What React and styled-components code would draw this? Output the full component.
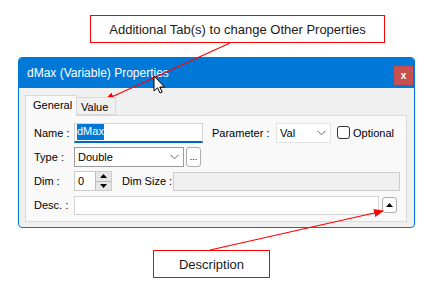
import React from 'react';
import styled, { createGlobalStyle } from 'styled-components';

const GlobalStyle = createGlobalStyle`
  body {
    margin: 0;
    background: #ffffff;
    font-family: "Liberation Sans", Arial, sans-serif;
  }
`;

const Page = styled.div`
  position: relative;
  width: 429px;
  height: 288px;
  padding-top: 15px;
  box-sizing: border-box;
  overflow: hidden;
`;

const Callout = styled.div`
  margin-left: ${(p) => p.$left}px;
  margin-top: ${(p) => p.$top || 0}px;
  width: ${(p) => p.$width}px;
  height: 28px;
  box-sizing: border-box;
  border: 1px solid #ff0000;
  display: flex;
  align-items: center;
  justify-content: center;
  font-size: 13px;
  color: #1a1a1a;
`;

const Window = styled.div`
  margin: 14px 0 0 18px;
  width: 397px;
  height: 171px;
  box-sizing: border-box;
  border: 1px solid #0078d7;
  border-radius: 4px;
  overflow: hidden;
  background: #f0f0f0;
`;

const TitleBar = styled.div`
  height: 30px;
  background: #0078d7;
  display: flex;
  align-items: center;
  justify-content: space-between;
  padding-left: 8px;
`;

const Title = styled.span`
  color: #ffffff;
  font-size: 12px;
`;

const CloseButton = styled.div`
  width: 19px;
  height: 19px;
  margin-top: 4px;
  margin-right: 1px;
  background: #c75050;
  color: #ffffff;
  font-size: 10px;
  font-weight: bold;
  display: flex;
  align-items: center;
  justify-content: center;
`;

const Body = styled.div`
  padding: 7px 7px 5px 6px;
`;

const TabStrip = styled.div`
  height: 20px;
  display: flex;
  align-items: flex-end;
`;

const Tab = styled.div`
  position: relative;
  z-index: 1;
  box-sizing: border-box;
  width: ${(p) => p.$width}px;
  height: ${(p) => (p.$active ? 21 : 18)}px;
  margin-bottom: ${(p) => (p.$active ? -1 : 0)}px;
  border: 1px solid #d9d9d9;
  border-bottom: ${(p) => (p.$active ? 'none' : '1px solid #d9d9d9')};
  border-left: ${(p) => (p.$active ? '1px solid #d9d9d9' : 'none')};
  background: ${(p) => (p.$active ? '#f9f9f9' : '#f0f0f0')};
  font-size: 11px;
  color: #000;
  padding-left: ${(p) => (p.$active ? 7 : 4)}px;
  padding-top: 3px;
`;

const Panel = styled.div`
  box-sizing: border-box;
  height: 107px;
  border: 1px solid #d9d9d9;
  background: #f9f9f9;
  padding: 6px 7px 0 8px;
  display: flex;
  flex-direction: column;
  gap: 4px;
`;

const Row = styled.div`
  display: flex;
  align-items: center;
  height: ${(p) => p.$height || 20}px;
`;

const Label = styled.span`
  flex: none;
  width: ${(p) => p.$width || 40}px;
  margin-left: ${(p) => p.$gap || 0}px;
  font-size: 11px;
  color: #000;
  white-space: nowrap;
`;

const TextBox = styled.div`
  flex: none;
  box-sizing: border-box;
  width: ${(p) => p.$width}px;
  height: ${(p) => p.$height || 19}px;
  background: ${(p) => (p.$disabled ? '#f0f0f0' : '#ffffff')};
  border: 1px solid ${(p) => (p.$disabled ? '#cccccc' : '#d4d4d4')};
  border-bottom: ${(p) => (p.$focused ? '2px solid #0067c0' : '')};
  display: flex;
  align-items: center;
  padding-left: 2px;
  font-size: 11px;
`;

const Selected = styled.span`
  background: #0078d7;
  color: #ffffff;
  padding: 1px 0 2px;
  line-height: 13px;
`;

const Select = styled.div`
  flex: none;
  box-sizing: border-box;
  width: ${(p) => p.$width}px;
  height: 20px;
  background: #ffffff;
  border: 1px solid ${(p) => (p.$light ? '#e3e3e3' : '#9a9a9a')};
  display: flex;
  align-items: center;
  justify-content: space-between;
  padding: 0 4px 0 3px;
  font-size: 11px;
  color: #000;
`;

const SmallButton = styled.div`
  flex: none;
  box-sizing: border-box;
  width: 15px;
  height: ${(p) => p.$height || 20}px;
  margin-left: ${(p) => p.$gap || 2}px;
  border: 1px solid #adadad;
  border-radius: 3px;
  background: #fdfdfd;
  display: flex;
  align-items: center;
  justify-content: center;
  font-size: 9px;
  color: #000;
`;

const CheckBox = styled.div`
  flex: none;
  box-sizing: border-box;
  width: 13px;
  height: 13px;
  margin-left: 6px;
  border: 1px solid #333333;
  border-radius: 3px;
  background: #ffffff;
`;

const CheckLabel = styled.span`
  margin-left: 3px;
  font-size: 11px;
  color: #000;
`;

const Spin = styled.div`
  flex: none;
  box-sizing: border-box;
  width: 38px;
  height: 20px;
  background: #ffffff;
  border: 1px solid #cccccc;
  display: flex;
  align-items: stretch;
  justify-content: space-between;
  font-size: 11px;
`;

const SpinValue = styled.span`
  align-self: center;
  padding-left: 3px;
`;

const SpinButtons = styled.div`
  width: 15px;
  display: flex;
  flex-direction: column;
  border-left: 1px solid #bcbcbc;
  background: #e6e6e6;
`;

const SpinArrow = styled.div`
  flex: 1;
  display: flex;
  align-items: center;
  justify-content: center;
  border-top: ${(p) => (p.$down ? '1px solid #bcbcbc' : 'none')};
`;

const Overlay = styled.svg`
  position: absolute;
  left: 0;
  top: 0;
  pointer-events: none;
`;

const Chevron = () => (
  <svg width="9" height="6" viewBox="0 0 9 6">
    <path d="M0.5 0.8 L4.5 4.8 L8.5 0.8" fill="none" stroke="#555" strokeWidth="0.9" />
  </svg>
);

const Tri = ({ down }) => (
  <svg width="7" height="4" viewBox="0 0 7 4">
    <path d={down ? 'M0 0 L7 0 L3.5 4 Z' : 'M0 4 L7 4 L3.5 0 Z'} fill="#000" />
  </svg>
);

const App = () => {
  return (
    <>
      <GlobalStyle />
      <Page>
        <Callout $left={90} $width={295}>
          Additional Tab(s) to change Other Properties
        </Callout>

        <Window>
          <TitleBar>
            <Title>dMax (Variable) Properties</Title>
            <CloseButton>x</CloseButton>
          </TitleBar>
          <Body>
            <TabStrip>
              <Tab $active $width={52}>General</Tab>
              <Tab $width={39}>Value</Tab>
            </TabStrip>
            <Panel>
              <Row $height={21}>
                <Label>Name :</Label>
                <TextBox $width={129} $height={20} $focused>
                  <Selected>dMax</Selected>
                </TextBox>
                <Label $gap={9} $width={64}>Parameter :</Label>
                <Select $width={55} $light>
                  Val
                  <Chevron />
                </Select>
                <CheckBox />
                <CheckLabel>Optional</CheckLabel>
              </Row>
              <Row>
                <Label>Type :</Label>
                <Select $width={110}>
                  Double
                  <Chevron />
                </Select>
                <SmallButton>...</SmallButton>
              </Row>
              <Row>
                <Label>Dim :</Label>
                <Spin>
                  <SpinValue>0</SpinValue>
                  <SpinButtons>
                    <SpinArrow><Tri /></SpinArrow>
                    <SpinArrow $down><Tri down /></SpinArrow>
                  </SpinButtons>
                </Spin>
                <Label $gap={10} $width={51}>Dim Size :</Label>
                <TextBox $width={227} $disabled />
              </Row>
              <Row>
                <Label>Desc. :</Label>
                <TextBox $width={305} />
                <SmallButton $gap={3} $height={16}>
                  <Tri />
                </SmallButton>
              </Row>
            </Panel>
          </Body>
        </Window>

        <Callout $left={153} $width={117} $top={22}>
          Description
        </Callout>

        <Overlay width="429" height="288" viewBox="0 0 429 288">
          <defs>
            <marker id="head" markerUnits="userSpaceOnUse" markerWidth="10" markerHeight="8" refX="9" refY="4" orient="auto">
              <path d="M0 0 L10 4 L0 8 Z" fill="#ff0000" />
            </marker>
          </defs>
          <line x1="230" y1="43" x2="105" y2="100" stroke="#ff0000" strokeWidth="1.2" markerEnd="url(#head)" />
          <line x1="210" y1="250" x2="383" y2="211" stroke="#ff0000" strokeWidth="1.2" markerEnd="url(#head)" />
          <path
            d="M154 76 L154 91 L157.5 87.8 L160 93 L162.2 92 L159.8 87 L164.5 87 Z"
            fill="#ffffff"
            stroke="#000000"
            strokeWidth="1"
            strokeLinejoin="round"
          />
        </Overlay>
      </Page>
    </>
  );
};

export default App;
